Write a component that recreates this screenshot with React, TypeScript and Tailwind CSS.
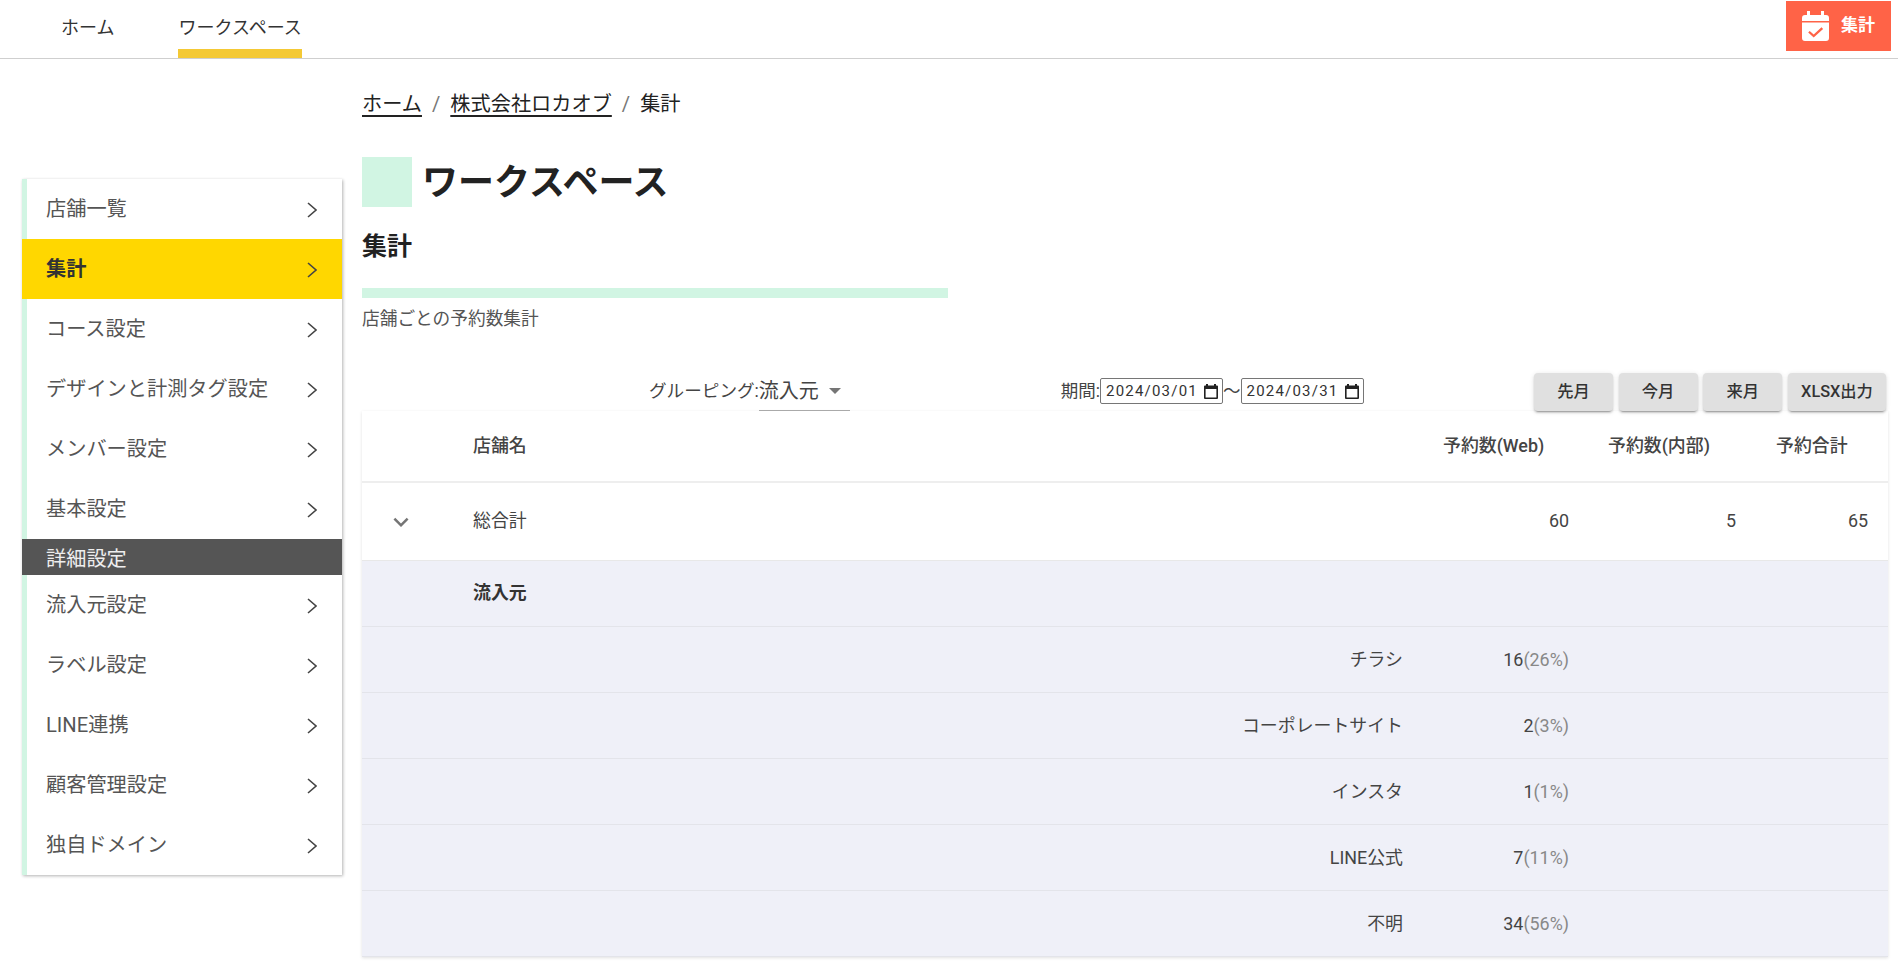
import React from 'react';

const font = "font-['Roboto','Noto_Sans_CJK_JP',sans-serif]";

const topMenu = [
  { label: '店舗一覧' },
  { label: '集計', active: true },
  { label: 'コース設定' },
  { label: 'デザインと計測タグ設定' },
  { label: 'メンバー設定' },
  { label: '基本設定' },
];

const detailMenu = ['流入元設定', 'ラベル設定', 'LINE連携', '顧客管理設定', '独自ドメイン'];

const sources = [
  { name: 'チラシ', count: 16, rate: '26%' },
  { name: 'コーポレートサイト', count: 2, rate: '3%' },
  { name: 'インスタ', count: 1, rate: '1%' },
  { name: 'LINE公式', count: 7, rate: '11%' },
  { name: '不明', count: 34, rate: '56%' },
];

const Chevron = () => (
  <svg viewBox="0 0 10 16" className="w-[10px] h-4 mt-[1px] fill-none stroke-[#444] stroke-[1.6]">
    <path d="M1 1l8 7-8 7" />
  </svg>
);

const MenuItem: React.FC<{ label: string; active?: boolean }> = ({ label, active }) => (
  <a
    className={`flex items-center justify-between h-[60px] pr-[25px] text-[20.2px] ${
      active
        ? 'bg-[#ffd700] pl-[24px] font-bold text-[#333]'
        : 'border-l-[5px] border-[#d1f5e3] pl-[19px] text-[#555]'
    }`}
  >
    <span>{label}</span>
    <Chevron />
  </a>
);

const DateBox: React.FC<{ value: string }> = ({ value }) => (
  <div className="flex items-center justify-between w-[123px] h-[26px] pl-[5px] pr-[4px] border border-[#767676] rounded-[2px] bg-white text-[15px] text-[#333]">
    <span className="tracking-[1.2px]">{value}</span>
    <svg viewBox="0 0 14 15" className="w-[14px] h-[15px] shrink-0">
      <path
        fill="#222"
        fillRule="evenodd"
        d="M2 0h2v1.5h6V0h2v1.5h1a1 1 0 0 1 1 1V14a1 1 0 0 1-1 1H1a1 1 0 0 1-1-1V2.5a1 1 0 0 1 1-1h1zM1.6 5v8.4h10.8V5z"
      />
    </svg>
  </div>
);

const GreyButton: React.FC<{ label: string; wide?: boolean }> = ({ label, wide }) => (
  <button
    className={`h-[38px] rounded-[4px] bg-[#e0e0e0] text-[16.3px] font-medium text-[#333] shadow-[0_3px_1px_-2px_rgba(0,0,0,0.2),0_2px_2px_0_rgba(0,0,0,0.14),0_1px_5px_0_rgba(0,0,0,0.12)] ${
      wide ? 'w-[98px]' : 'w-[79px]'
    }`}
  >
    {label}
  </button>
);

export default function App() {
  return (
    <div className={`h-screen overflow-hidden bg-white ${font}`}>
      {/* Header */}
      <header className="flex items-start justify-between h-[59px] border-b border-[#cfcfcf] text-[18px] text-[#333]">
        <nav className="flex pl-[61px] gap-[64px]">
          <a className="h-[58px] pt-[14px]">ホーム</a>
          <a className="h-[58px] pt-[14px] border-b-[9px] border-[#f4c935]">ワークスペース</a>
        </nav>
        <button className="flex items-center gap-[12px] w-[105px] h-[50px] mt-px mr-[7px] pl-[16px] bg-[#ff6347] text-white text-[17px] font-bold">
          <svg viewBox="0 0 27 30" className="w-[27px] h-[30px] fill-white">
            <path d="M5 0h3v4h11V0h3v4h2a3 3 0 0 1 3 3v3H0V7a3 3 0 0 1 3-3h2z" />
            <path
              fillRule="evenodd"
              d="M0 11.5h27V27a3 3 0 0 1-3 3H3a3 3 0 0 1-3-3zM19.5 16.3l-7.8 7.2-4-3.6-1.5 1.6 5.5 5 9.4-8.6z"
            />
          </svg>
          <span>集計</span>
        </button>
      </header>

      <div className="flex">
        {/* Side menu */}
        <aside className="w-[320px] ml-[22px] mt-[120px] self-start bg-white shadow-[1px_1px_3px_rgba(0,0,0,0.3)]">
          {topMenu.map((m) => (
            <MenuItem key={m.label} label={m.label} active={m.active} />
          ))}
          <div className="h-[36px] pl-[24px] pt-[2px] bg-[#555] text-[20.2px] leading-[36px] text-[#eee]">詳細設定</div>
          {detailMenu.map((m) => (
            <MenuItem key={m} label={m} />
          ))}
        </aside>

        {/* Main */}
        <main className="w-[1526px] ml-[20px] pt-[30px]">
          <div className="flex items-center h-[30px] text-[20.2px] text-[#222]">
            <a className="underline underline-offset-[4px]">ホーム</a>
            <span className="mx-[10px] text-[#777]">/</span>
            <a className="underline underline-offset-[4px]">株式会社ロカオブ</a>
            <span className="mx-[10px] text-[#777]">/</span>
            <span>集計</span>
          </div>

          <div className="flex items-center gap-[10px] mt-[38px]">
            <div className="w-[50px] h-[50px] bg-[#d1f5e3]" />
            <h1 className="text-[36px] leading-[52px] h-[50px] font-bold text-[#222]">ワークスペース</h1>
          </div>
          <h2 className="mt-[25px] text-[25px] leading-[30px] font-bold text-[#222]">集計</h2>
          <div className="w-[586px] h-[10px] mt-[26px] bg-[#d1f5e3]" />
          <p className="mt-[8px] text-[17.7px] leading-[26px] text-[#555]">店舗ごとの予約数集計</p>

          {/* Filters */}
          <div className="flex items-stretch h-[38px] mt-[41px] pr-[2px] text-[#444]">
            <div className="flex items-center ml-[287px] pb-[2px] text-[17.6px]">グルーピング:</div>
            <div className="flex items-center justify-between w-[91px] pb-[2px] border-b border-[#aaa] text-[20px] pr-[9px]">
              <span>流入元</span>
              <svg viewBox="7 10 10 5" className="w-[12px] h-[6px] fill-[#757575]">
                <path d="M7 10l5 5 5-5z" />
              </svg>
            </div>
            <div className="flex items-center ml-[211px] gap-0 text-[17.5px] pb-[2px]">
              <span>期間:</span>
              <DateBox value="2024/03/01" />
              <span>〜</span>
              <DateBox value="2024/03/31" />
            </div>
            <div className="flex gap-[5.7px] ml-auto">
              <GreyButton label="先月" />
              <GreyButton label="今月" />
              <GreyButton label="来月" />
              <GreyButton label="XLSX出力" wide />
            </div>
          </div>

          {/* Table */}
          <div className="bg-white shadow-[0_1px_3px_rgba(0,0,0,0.12)]">
            <table className="w-full table-fixed border-collapse text-[17.9px] text-[#444]">
              <colgroup>
                <col className="w-[91px]" />
                <col className="w-[970px]" />
                <col className="w-[165px]" />
                <col className="w-[168px]" />
                <col className="w-[132px]" />
              </colgroup>
              <thead>
                <tr className="h-[71px] border-b-2 border-[#eeeeee] font-medium text-left">
                  <th />
                  <th className="px-[20px] font-medium">店舗名</th>
                  <th className="px-[20px] font-medium whitespace-nowrap">予約数(Web)</th>
                  <th className="px-[20px] font-medium whitespace-nowrap">予約数(内部)</th>
                  <th className="px-[20px] font-medium whitespace-nowrap">予約合計</th>
                </tr>
              </thead>
              <tbody>
                <tr className="h-[78px] border-b border-[#e8e8e8]">
                  <td className="pl-[24px] pt-[2px]">
                    <svg viewBox="0 0 24 24" className="block w-[30px] h-[30px] fill-[#757575]">
                      <path d="M7.41 8.59 12 13.17l4.59-4.58L18 10l-6 6-6-6z" />
                    </svg>
                  </td>
                  <td className="px-[20px]">総合計</td>
                  <td className="pl-[20px] pr-[19px] text-right">60</td>
                  <td className="px-[20px] text-right">5</td>
                  <td className="px-[20px] text-right">65</td>
                </tr>
                <tr className="h-[66px] bg-[#eff0f8] border-b border-[#e3e4ea]">
                  <td />
                  <td className="px-[20px] font-bold text-[#333]">流入元</td>
                  <td colSpan={3} />
                </tr>
                {sources.map((s) => (
                  <tr key={s.name} className="h-[66px] bg-[#eff0f8] border-b border-[#e3e4ea]">
                    <td />
                    <td className="px-[20px] pt-[2px] text-right">{s.name}</td>
                    <td className="pl-[20px] pr-[19px] pt-[2px] text-right">
                      {s.count}
                      <span className="text-[#888]">({s.rate})</span>
                    </td>
                    <td colSpan={2} />
                  </tr>
                ))}
              </tbody>
            </table>
          </div>
        </main>
      </div>
    </div>
  );
}
